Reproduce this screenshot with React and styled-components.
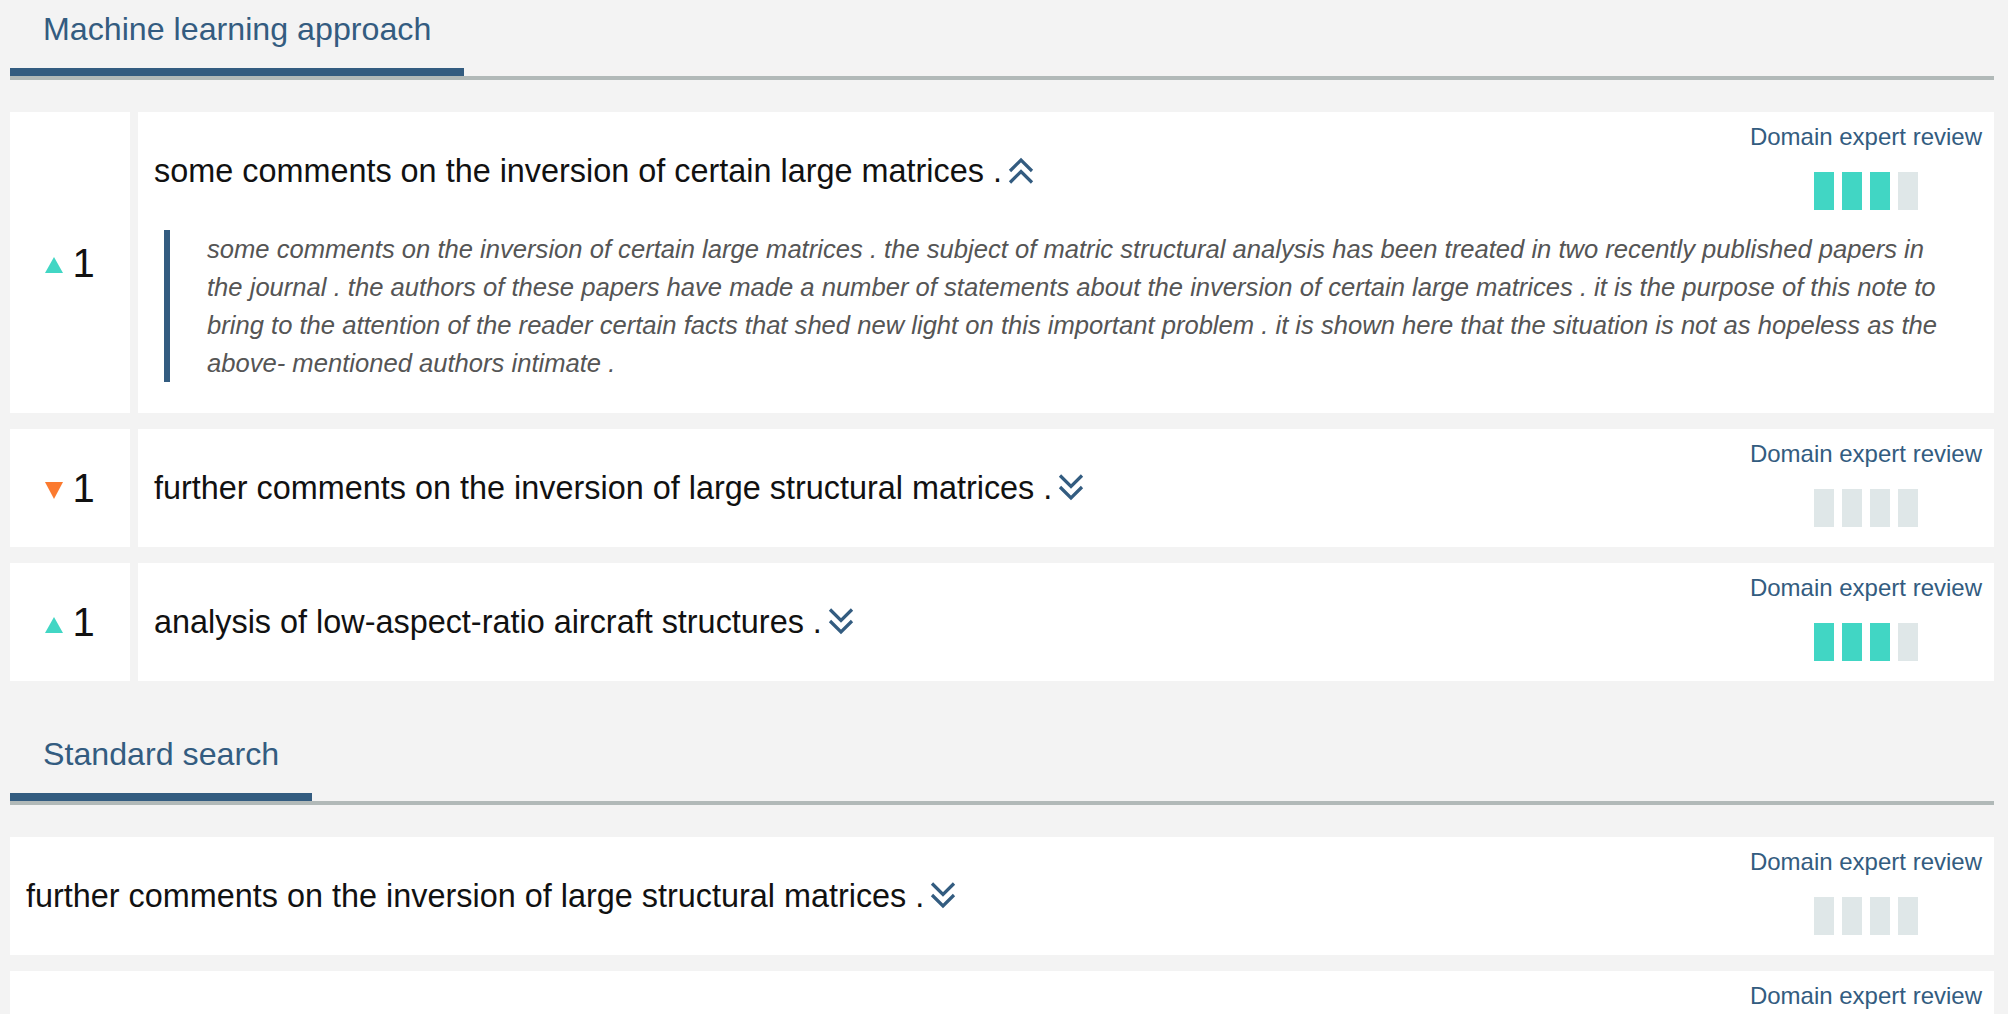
import React from "react";
import styled, { createGlobalStyle } from "styled-components";

const Global = createGlobalStyle`
  html, body { margin: 0; padding: 0; overflow: hidden; background: #f3f3f3; }
  body { font-family: "Liberation Sans", Arial, Helvetica, sans-serif; }
`;

const Page = styled.div`
  padding: 0 14px 0 10px;
  background: #f3f3f3;
  min-height: 1014px;
`;

const Section = styled.section`
  & + & { margin-top: 44px; }
`;

const TabBar = styled.div`
  display: flex;
  border-bottom: 4px solid #b1b9b8;
`;

const Tab = styled.div`
  padding: 13px 33px 23px 33px;
  font-size: 32.2px;
  line-height: 32px;
  color: #335c80;
  border-bottom: 8px solid #335c80;
`;

const CardList = styled.div`
  display: flex;
  flex-direction: column;
  gap: 16px;
  margin-top: 32px;
`;

const Card = styled.div`
  display: flex;
  gap: 8px;
`;

const ScoreCell = styled.div`
  width: 120px;
  flex: none;
  background: #fff;
  display: flex;
  align-items: center;
  justify-content: center;
  gap: 9px;
`;

const Triangle = styled.span`
  width: 0;
  height: 0;
  margin-top: 5px;
  border-left: 9px solid transparent;
  border-right: 9px solid transparent;
  ${(p) =>
    p.$up
      ? `border-bottom: 16px solid #41d6c4;`
      : `border-top: 17px solid #fb7a2f;`}
`;

const ScoreNum = styled.span`
  font-size: 40px;
  line-height: 40px;
  color: #111;
`;

const Body = styled.div`
  flex: 1;
  background: #fff;
  display: grid;
  grid-template-columns: 1fr auto;
  align-items: start;
  padding: 13px 12px 20px 16px;
`;

const Title = styled.div`
  padding-top: 26px;
  font-size: 32.4px;
  line-height: 40px;
  color: #111;
`;

const Chevron = styled.svg`
  width: 26px;
  height: 27px;
  margin-left: 6px;
  vertical-align: -2px;
`;

const Review = styled.div`
  display: flex;
  flex-direction: column;
  align-items: center;
`;

const ReviewLabel = styled.div`
  font-size: 24px;
  line-height: 24px;
  color: #335c80;
  white-space: nowrap;
`;

const Bars = styled.div`
  display: flex;
  gap: 8px;
  margin-top: 23px;
`;

const Bar = styled.span`
  width: 20px;
  height: 38px;
  background: ${(p) => (p.$on ? "#41d6c4" : "#dfe7e8")};
`;

const Abstract = styled.blockquote`
  grid-column: 1 / -1;
  margin: 20px 20px 11px 10px;
  border-left: 6px solid #335c80;
  padding-left: 37px;
  font-size: 25.6px;
  line-height: 38px;
  font-style: italic;
  color: #555;
`;

function ChevronIcon({ up }) {
  return (
    <Chevron viewBox="0 0 26 27" fill="none" stroke="#335c80" strokeWidth="3.2" strokeLinecap="butt" strokeLinejoin="miter">
      {up ? (
        <>
          <polyline points="2,14 13,3 24,14" />
          <polyline points="2,25.5 13,14.5 24,25.5" />
        </>
      ) : (
        <>
          <polyline points="2,1.5 13,12.5 24,1.5" />
          <polyline points="2,13 13,24 24,13" />
        </>
      )}
    </Chevron>
  );
}

function ReviewBlock({ level }) {
  return (
    <Review>
      <ReviewLabel>Domain expert review</ReviewLabel>
      <Bars>
        {[0, 1, 2, 3].map((i) => (
          <Bar key={i} $on={i < level} />
        ))}
      </Bars>
    </Review>
  );
}

function Result({ score, up, title, level, abstract, expanded }) {
  return (
    <Card>
      {score !== undefined && (
        <ScoreCell>
          <Triangle $up={up} />
          <ScoreNum>{score}</ScoreNum>
        </ScoreCell>
      )}
      <Body>
        <Title>
          {title}
          <ChevronIcon up={expanded} />
        </Title>
        <ReviewBlock level={level} />
        {expanded && abstract && <Abstract>{abstract}</Abstract>}
      </Body>
    </Card>
  );
}

const ABSTRACT =
  "some comments on the inversion of certain large matrices . the subject of matric structural analysis has been treated in two recently published papers in the journal . the authors of these papers have made a number of statements about the inversion of certain large matrices . it is the purpose of this note to bring to the attention of the reader certain facts that shed new light on this important problem . it is shown here that the situation is not as hopeless as the above- mentioned authors intimate .";

export default function App() {
  return (
    <>
      <Global />
      <Page>
        <Section>
          <TabBar>
            <Tab>Machine learning approach</Tab>
          </TabBar>
          <CardList>
            <Result
              score={1}
              up
              expanded
              level={3}
              title="some comments on the inversion of certain large matrices ."
              abstract={ABSTRACT}
            />
            <Result
              score={1}
              up={false}
              level={0}
              title="further comments on the inversion of large structural matrices ."
            />
            <Result
              score={1}
              up
              level={3}
              title="analysis of low-aspect-ratio aircraft structures ."
            />
          </CardList>
        </Section>
        <Section>
          <TabBar>
            <Tab>Standard search</Tab>
          </TabBar>
          <CardList>
            <Result
              level={0}
              title="further comments on the inversion of large structural matrices ."
            />
            <Result
              level={3}
              title="analysis of low-aspect-ratio aircraft structures ."
            />
          </CardList>
        </Section>
      </Page>
    </>
  );
}
